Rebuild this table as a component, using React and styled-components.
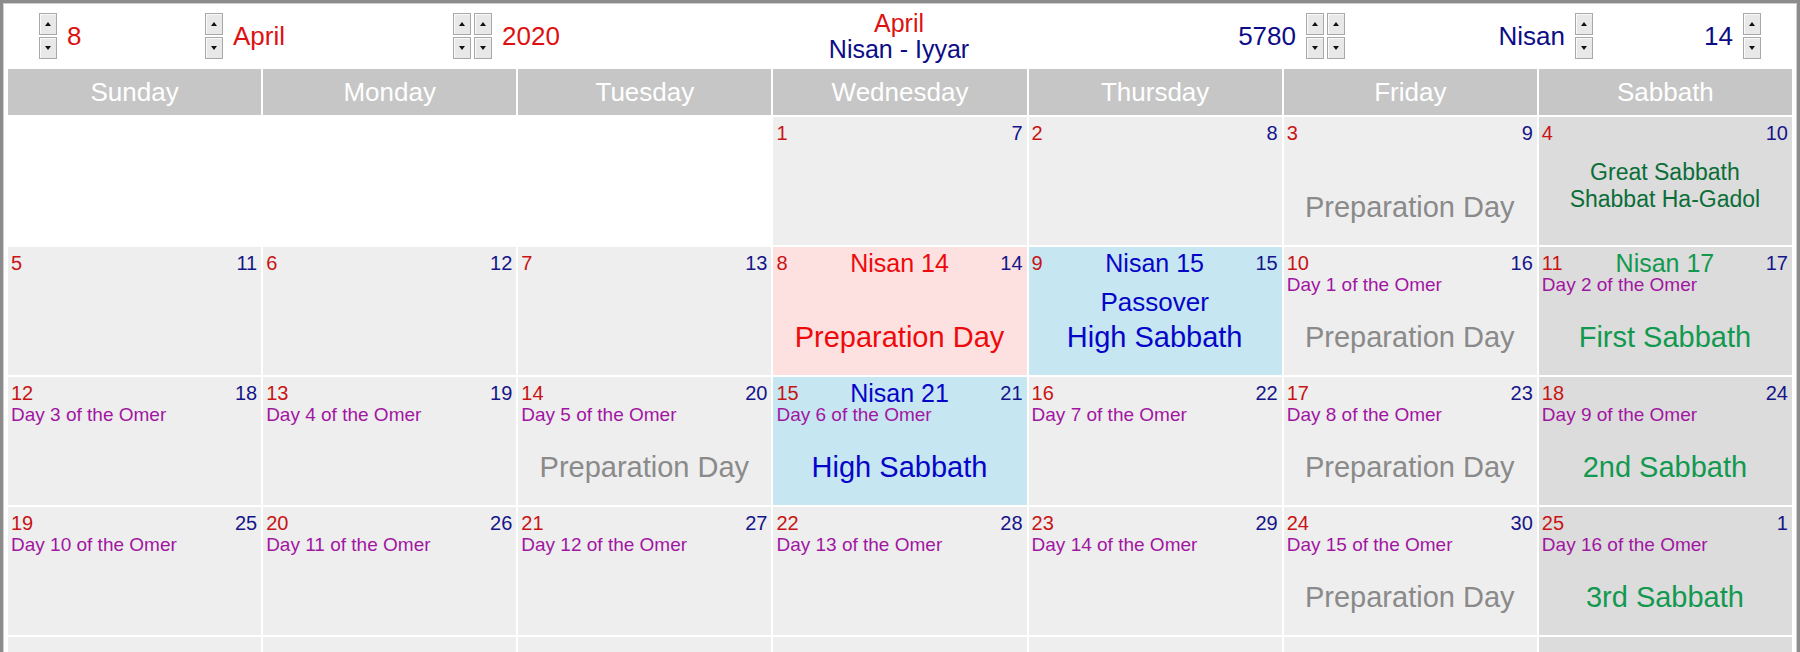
import React from 'react';
import styled, { createGlobalStyle } from 'styled-components';

const GlobalStyle = createGlobalStyle`
  html, body {
    margin: 0;
    padding: 0;
    overflow: hidden;
    background: #fff;
  }
  body {
    font-family: "Liberation Sans", Arial, sans-serif;
  }
`;

const RED = '#dd1111';
const NAVY = '#0c0c86';
const GRAY = '#8a8a8a';
const GREEN = '#12994f';
const DARK_GREEN = '#0b6d37';
const BLUE = '#0505c8';
const PINK_RED = '#ee0a0a';

const tones = {
  blank: 'transparent',
  day: '#eeeeee',
  sab: '#dcdcdc',
  pink: '#fde1e1',
  blue: '#c6e6f2',
};

const Frame = styled.div`
  border: 3px solid #8b8b8b;
  box-shadow: inset 0 0 0 1px #cfcfcf;
  padding: 0 5px;
  background: #fff;
`;

const TopBar = styled.div`
  display: grid;
  grid-template-columns: 166px 248px 1fr auto 1fr 248px 168px;
  align-items: center;
  height: 66px;
  padding: 0 31px;
`;

const Group = styled.div`
  display: flex;
  align-items: center;
  justify-content: ${p => (p.$end ? 'flex-end' : 'flex-start')};
  gap: 10px;
`;

const Label = styled.span`
  font-size: 26px;
  color: ${p => p.$color};
`;

const Spinners = styled.div`
  display: flex;
  gap: 3px;
`;

const Spinner = styled.div`
  display: flex;
  flex-direction: column;
  gap: 2px;
`;

const SpinBtn = styled.span`
  display: flex;
  align-items: center;
  justify-content: center;
  width: 18px;
  height: 22px;
  box-sizing: border-box;
  border: 1px solid #a8a8a8;
  background: #e8e8e8;
  box-shadow: inset 1px 1px 0 #fbfbfb;

  &::after {
    content: '';
    border-left: 3.5px solid transparent;
    border-right: 3.5px solid transparent;
    ${p => (p.$down ? 'border-top: 4px solid #111;' : 'border-bottom: 4px solid #111;')}
  }
`;

const MonthTitle = styled.div`
  text-align: center;
  font-size: 25px;
  line-height: 26px;
`;

const Line = styled.div`
  color: ${p => p.$color};
`;

const Calendar = styled.div`
  display: grid;
  grid-template-columns: repeat(7, 1fr);
  grid-template-rows: 46px;
  grid-auto-rows: 128px;
  gap: 2px;
`;

const DayName = styled.div`
  background: #c6c6c6;
  color: #fff;
  font-size: 26px;
  line-height: 46px;
  text-align: center;
`;

const Cell = styled.div`
  background: ${p => tones[p.$tone]};
  padding: 3px 4px 0 3px;
  overflow: hidden;
`;

const TopLine = styled.div`
  display: grid;
  grid-template-columns: 1fr auto 1fr;
  align-items: start;
  height: 26px;
`;

const Greg = styled.span`
  justify-self: start;
  font-size: 20px;
  line-height: 26px;
  color: #c81414;
`;

const Heb = styled.span`
  justify-self: end;
  font-size: 20px;
  line-height: 26px;
  color: #15158a;
`;

const Title = styled.span`
  font-size: 25px;
  line-height: 26px;
  color: ${p => p.$color};
  white-space: nowrap;
`;

const Omer = styled.div`
  height: 18px;
  font-size: 19px;
  line-height: 18px;
  color: #a116a1;
  white-space: nowrap;
`;

const Mid = styled.div`
  height: 16px;
  font-size: 26px;
  line-height: 16px;
  text-align: center;
  color: ${p => p.$color};
`;

const Big = styled.div`
  font-size: 29px;
  line-height: 55px;
  text-align: center;
  color: ${p => p.$color};
  white-space: nowrap;
`;

const Note = styled.div`
  padding-top: 13px;
  font-size: 23px;
  line-height: 27px;
  text-align: center;
  color: ${DARK_GREEN};
`;

const Spin = ({ count = 1 }) => (
  <Spinners>
    {Array.from({ length: count }).map((_, i) => (
      <Spinner key={i}>
        <SpinBtn />
        <SpinBtn $down />
      </Spinner>
    ))}
  </Spinners>
);

const dayNames = ['Sunday', 'Monday', 'Tuesday', 'Wednesday', 'Thursday', 'Friday', 'Sabbath'];

const prep = { big: 'Preparation Day', bigColor: GRAY };
const omer = n => `Day ${n} of the Omer`;

const weeks = [
  [
    { tone: 'blank' },
    { tone: 'blank' },
    { tone: 'blank' },
    { g: 1, h: 7 },
    { g: 2, h: 8 },
    { g: 3, h: 9, ...prep },
    { g: 4, h: 10, tone: 'sab', note: ['Great Sabbath', 'Shabbat Ha-Gadol'] },
  ],
  [
    { g: 5, h: 11 },
    { g: 6, h: 12 },
    { g: 7, h: 13 },
    { g: 8, h: 14, tone: 'pink', title: 'Nisan 14', titleColor: PINK_RED, big: 'Preparation Day', bigColor: PINK_RED },
    { g: 9, h: 15, tone: 'blue', title: 'Nisan 15', titleColor: BLUE, mid: 'Passover', big: 'High Sabbath', bigColor: BLUE },
    { g: 10, h: 16, omer: omer(1), ...prep },
    { g: 11, h: 17, tone: 'sab', title: 'Nisan 17', titleColor: GREEN, omer: omer(2), big: 'First Sabbath', bigColor: GREEN },
  ],
  [
    { g: 12, h: 18, omer: omer(3) },
    { g: 13, h: 19, omer: omer(4) },
    { g: 14, h: 20, omer: omer(5), ...prep },
    { g: 15, h: 21, tone: 'blue', title: 'Nisan 21', titleColor: BLUE, omer: omer(6), big: 'High Sabbath', bigColor: BLUE },
    { g: 16, h: 22, omer: omer(7) },
    { g: 17, h: 23, omer: omer(8), ...prep },
    { g: 18, h: 24, tone: 'sab', omer: omer(9), big: '2nd Sabbath', bigColor: GREEN },
  ],
  [
    { g: 19, h: 25, omer: omer(10) },
    { g: 20, h: 26, omer: omer(11) },
    { g: 21, h: 27, omer: omer(12) },
    { g: 22, h: 28, omer: omer(13) },
    { g: 23, h: 29, omer: omer(14) },
    { g: 24, h: 30, omer: omer(15), ...prep },
    { g: 25, h: 1, tone: 'sab', omer: omer(16), big: '3rd Sabbath', bigColor: GREEN },
  ],
  [{}, {}, {}, {}, {}, {}, { tone: 'sab' }],
];

function DayCell({ day }) {
  const tone = day.tone || 'day';
  if (day.g === undefined) return <Cell $tone={tone} />;
  return (
    <Cell $tone={tone}>
      <TopLine>
        <Greg>{day.g}</Greg>
        <Title $color={day.titleColor}>{day.title}</Title>
        <Heb>{day.h}</Heb>
      </TopLine>
      {day.note ? (
        <Note>
          {day.note.map(t => (
            <div key={t}>{t}</div>
          ))}
        </Note>
      ) : (
        <>
          <Omer>{day.omer}</Omer>
          <Mid $color={day.titleColor}>{day.mid}</Mid>
          <Big $color={day.bigColor}>{day.big}</Big>
        </>
      )}
    </Cell>
  );
}

export default function App() {
  return (
    <>
      <GlobalStyle />
      <Frame>
        <TopBar>
          <Group>
            <Spin />
            <Label $color={RED}>8</Label>
          </Group>
          <Group>
            <Spin />
            <Label $color={RED}>April</Label>
          </Group>
          <Group>
            <Spin count={2} />
            <Label $color={RED}>2020</Label>
          </Group>
          <MonthTitle>
            <Line $color={RED}>April</Line>
            <Line $color={NAVY}>Nisan - Iyyar</Line>
          </MonthTitle>
          <Group $end>
            <Label $color={NAVY}>5780</Label>
            <Spin count={2} />
          </Group>
          <Group $end>
            <Label $color={NAVY}>Nisan</Label>
            <Spin />
          </Group>
          <Group $end>
            <Label $color={NAVY}>14</Label>
            <Spin />
          </Group>
        </TopBar>
        <Calendar>
          {dayNames.map(n => (
            <DayName key={n}>{n}</DayName>
          ))}
          {weeks.flat().map((d, i) => (
            <DayCell key={i} day={d} />
          ))}
        </Calendar>
      </Frame>
    </>
  );
}
